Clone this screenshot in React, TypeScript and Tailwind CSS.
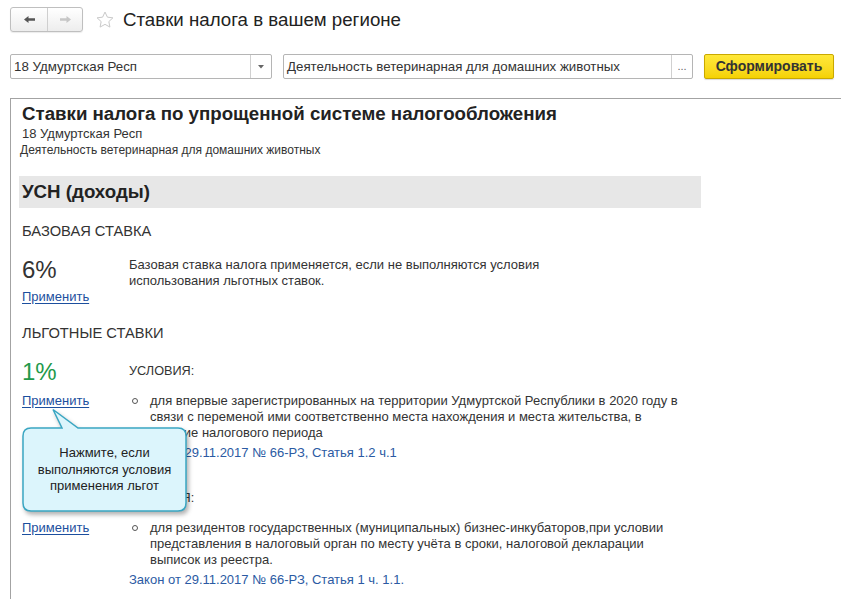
import React from 'react';

const linkCls = 'block w-fit text-[13px] leading-[16px] text-[#1c4f9e] underline underline-offset-[2px]';
const lawCls = 'text-[13px] leading-[16px] text-[#2b5aa3]';

function Arrow({ left, color }: { left?: boolean; color: string }) {
  return (
    <svg width="11" height="7" viewBox="0 0 11 7">
      {left ? (
        <path d="M0 3.5 L4.5 0 V2.3 H11 V4.7 H4.5 V7 Z" fill={color} />
      ) : (
        <path d="M11 3.5 L6.5 0 V2.3 H0 V4.7 H6.5 V7 Z" fill={color} />
      )}
    </svg>
  );
}

function Condition({ rate, lines, law }: { rate: string; lines: string[]; law: string }) {
  return (
    <div className="pl-[3px]">
      <div className="flex items-center h-[28px]">
        <div className="w-[107px] text-[24px] leading-[28px] text-[#22994a]">{rate}</div>
        <div className="text-[12.7px] text-[#333]">УСЛОВИЯ:</div>
      </div>
      <div className="flex mt-[7px]">
        <div className="w-[107px]">
          <a className={linkCls}>Применить</a>
        </div>
        <div>
          <div className="flex">
            <div className="w-[21px] h-[16px] flex items-center pl-[3px]">
              <span className="w-[6px] h-[6px] rounded-full border border-[#555]" />
            </div>
            <div className="text-[13px] leading-[16px] text-[#333] whitespace-nowrap">
              {lines.map((l) => (
                <div key={l}>{l}</div>
              ))}
            </div>
          </div>
          <div className={`${lawCls} mt-[4px]`}>{law}</div>
        </div>
      </div>
    </div>
  );
}

export default function App() {
  return (
    <div className="w-[841px] h-[599px] overflow-hidden bg-white font-['Liberation_Sans',Arial,sans-serif] text-[#333]">
      {/* header */}
      <div className="flex items-center h-[25px] mt-[7px] ml-[10px]">
        <div className="flex h-[25px] w-[73px] border border-[#bfbfbf] rounded-[3px] bg-gradient-to-b from-white to-[#ededed] shadow-[0_1px_1px_rgba(0,0,0,0.08)]">
          <div className="w-[37px] flex items-center justify-center border-r border-[#cfcfcf]">
            <Arrow left color="#555" />
          </div>
          <div className="flex-1 flex items-center justify-center">
            <Arrow color="#c6c6c6" />
          </div>
        </div>
        <svg className="ml-[12px]" width="20" height="20" viewBox="0 0 24 24">
          <path
            d="M12 2.5 L14.9 8.6 L21.5 9.4 L16.6 13.9 L17.9 20.5 L12 17.2 L6.1 20.5 L7.4 13.9 L2.5 9.4 L9.1 8.6 Z"
            fill="none"
            stroke="#c9c9c9"
            strokeWidth="1.2"
            strokeLinejoin="round"
          />
        </svg>
        <h1 className="ml-[8px] text-[18.7px] leading-[22px] text-[#222]">Ставки налога в вашем регионе</h1>
      </div>

      {/* filters */}
      <div className="flex items-center mt-[22px] ml-[10px] h-[25px]">
        <div className="flex w-[262px] h-[25px] border border-[#b5b5b5] rounded-[2px] bg-white">
          <div className="flex-1 pl-[3px] text-[13.3px] leading-[23px] text-[#333]">18 Удмуртская Респ</div>
          <div className="w-[21px] border-l border-[#d0d0d0] flex items-center justify-center">
            <svg width="6" height="4" viewBox="0 0 6 4">
              <path d="M0 0 H6 L3 3.5 Z" fill="#666" />
            </svg>
          </div>
        </div>
        <div className="flex ml-[11px] w-[410px] h-[25px] border border-[#b5b5b5] rounded-[2px] bg-white">
          <div className="flex-1 pl-[3px] text-[13.3px] leading-[23px] text-[#333]">
            Деятельность ветеринарная для домашних животных
          </div>
          <div className="w-[21px] border-l border-[#d0d0d0] text-center text-[11px] leading-[23px] text-[#666]">...</div>
        </div>
        <button className="ml-[11px] w-[130px] h-[25px] rounded-[2px] border border-[#c9a800] bg-gradient-to-b from-[#ffe838] to-[#f5d200] text-[14px] font-bold text-[#333] shadow-[0_1px_1px_rgba(0,0,0,0.15)]">
          Сформировать
        </button>
      </div>

      {/* report */}
      <div className="relative mt-[19px] ml-[10px] h-[520px] border-l border-t border-[#a3a3a3] pl-[8px]">
        <div className="pl-[3px] pt-[4px]">
          <h2 className="text-[18.7px] leading-[22px] font-bold text-[#222]">
            Ставки налога по упрощенной системе налогообложения
          </h2>
          <div className="text-[13px] leading-[16px] text-[#333] mt-[1px]">18 Удмуртская Респ</div>
          <div className="-ml-[2px] text-[12px] leading-[17px] text-[#333]">
            Деятельность ветеринарная для домашних животных
          </div>
        </div>

        <div className="mt-[17px] w-[682px] h-[32px] bg-[#e7e7e7] pl-[3px] flex items-center">
          <span className="text-[18.7px] font-bold text-[#222]">УСН (доходы)</span>
        </div>

        <div className="pl-[3px]">
          <div className="mt-[14px] text-[14.7px] leading-[18px] text-[#333]">БАЗОВАЯ СТАВКА</div>
          <div className="flex mt-[16px]">
            <div className="w-[107px]">
              <div className="text-[24px] leading-[28px] text-[#333]">6%</div>
              <a className={`${linkCls} mt-[5px]`}>Применить</a>
            </div>
            <div className="pt-[1px] text-[13px] leading-[16px] text-[#333]">
              Базовая ставка налога применяется, если не выполняются условия
              <br />
              использования льготных ставок.
            </div>
          </div>
          <div className="mt-[19px] text-[14.7px] leading-[18px] text-[#333]">ЛЬГОТНЫЕ СТАВКИ</div>
        </div>

        <div className="mt-[16px]">
          <Condition
            rate="1%"
            lines={[
              'для впервые зарегистрированных на территории Удмуртской Республики в 2020 году в',
              'связи с переменой ими соответственно места нахождения и места жительства, в',
              'течение налогового периода',
            ]}
            law="Закон от 29.11.2017 № 66-РЗ, Статья 1.2 ч.1"
          />
        </div>
        <div className="mt-[24px]">
          <Condition
            rate="1%"
            lines={[
              'для резидентов государственных (муниципальных) бизнес-инкубаторов,при условии',
              'представления в налоговый орган по месту учёта в сроки, налоговой декларации',
              'выписок из реестра.',
            ]}
            law="Закон от 29.11.2017 № 66-РЗ, Статья 1 ч. 1.1."
          />
        </div>

        {/* tooltip */}
        <div className="absolute left-[11px] top-[309px] w-[168px] h-[107px]">
          <svg
            className="absolute inset-0 drop-shadow-[2px_3px_2px_rgba(0,0,0,0.3)]"
            width="168"
            height="107"
            viewBox="0 0 168 107"
          >
            <path
              d="M9 20 H40 L31 1.5 L56 20 H156 Q164 20 164 28 V95 Q164 103 156 103 H9 Q1 103 1 95 V28 Q1 20 9 20 Z"
              fill="#dcf5fc"
              stroke="#3aa6c2"
              strokeWidth="1.5"
            />
          </svg>
          <div className="absolute left-0 top-[37px] w-[165px] text-center text-[13px] leading-[16.5px] text-[#222]">
            Нажмите, если
            <br />
            выполняются условия
            <br />
            применения льгот
          </div>
        </div>
      </div>
    </div>
  );
}
